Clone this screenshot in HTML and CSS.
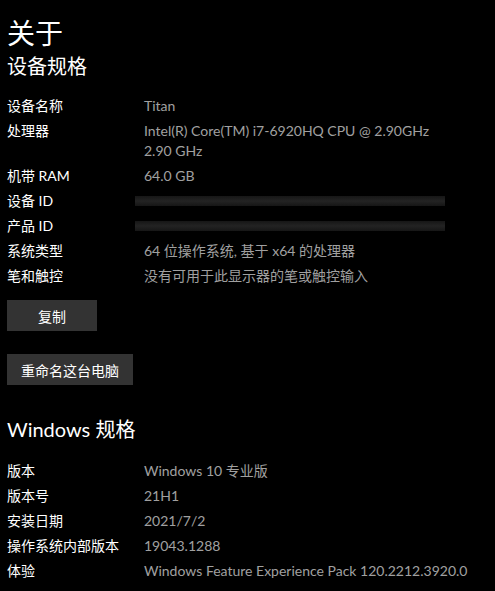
FILE: index.html
```html
<!DOCTYPE html>
<html lang="zh-CN">
<head>
<meta charset="utf-8">
<title>关于</title>
<link rel="stylesheet" href="styles.css">
</head>
<body>
<main class="page">
  <h1 class="title">关于</h1>
  <h2 class="section-title">设备规格</h2>
  <dl class="specs">
    <dt>设备名称</dt><dd>Titan</dd>
    <dt>处理器</dt><dd>Intel(R) Core(TM) i7-6920HQ CPU @ 2.90GHz<br>2.90 GHz</dd>
    <dt>机带 RAM</dt><dd>64.0 GB</dd>
    <dt>设备 ID</dt><dd class="redacted"><span class="bar"></span></dd>
    <dt>产品 ID</dt><dd class="redacted"><span class="bar"></span></dd>
    <dt>系统类型</dt><dd>64 位操作系统, 基于 x64 的处理器</dd>
    <dt>笔和触控</dt><dd>没有可用于此显示器的笔或触控输入</dd>
  </dl>
  <button class="btn btn-copy">复制</button>
  <button class="btn btn-rename">重命名这台电脑</button>
  <h2 class="section-title win-title">Windows 规格</h2>
  <dl class="specs win-specs">
    <dt>版本</dt><dd>Windows 10 专业版</dd>
    <dt>版本号</dt><dd>21H1</dd>
    <dt>安装日期</dt><dd>2021/7/2</dd>
    <dt>操作系统内部版本</dt><dd>19043.1288</dd>
    <dt>体验</dt><dd>Windows Feature Experience Pack 120.2212.3920.0</dd>
  </dl>
</main>
</body>
</html>
```
FILE: styles.css
```css
html, body {
  margin: 0;
  padding: 0;
  background: #000;
  color: #fff;
  font-family: Lato, "Noto Sans CJK SC", sans-serif;
}
.page {
  padding: 0 7px;
  height: 591px;
  overflow: hidden;
}
.title {
  margin: 0;
  padding-top: 14px;
  font-size: 28px;
  font-weight: 400;
  line-height: 38px;
}
.section-title {
  margin: 0;
  font-size: 20px;
  font-weight: 400;
  line-height: 28px;
}
.specs {
  display: grid;
  grid-template-columns: 137px 1fr;
  row-gap: 5px;
  margin: 16px 0 0;
  font-size: 14px;
  line-height: 20px;
}
.win-specs {
  margin-top: 18px;
}
.specs dt {
  color: #fff;
}
.specs dd {
  margin: 0;
  color: #a0a0a0;
}
.redacted {
  display: flex;
  align-items: center;
}
.bar {
  display: block;
  width: 310px;
  height: 10px;
  margin-left: -9px;
  background: linear-gradient(#161616, #232323 50%, #161616);
}
.btn {
  display: block;
  border: 0;
  background: #333;
  color: #fff;
  font-family: inherit;
  font-size: 14px;
  height: 31px;
  padding: 0;
}
.btn-copy {
  width: 90px;
  margin-top: 14px;
}
.btn-rename {
  width: 126px;
  margin-top: 23px;
}
.win-title {
  margin-top: 30px;
}
```
